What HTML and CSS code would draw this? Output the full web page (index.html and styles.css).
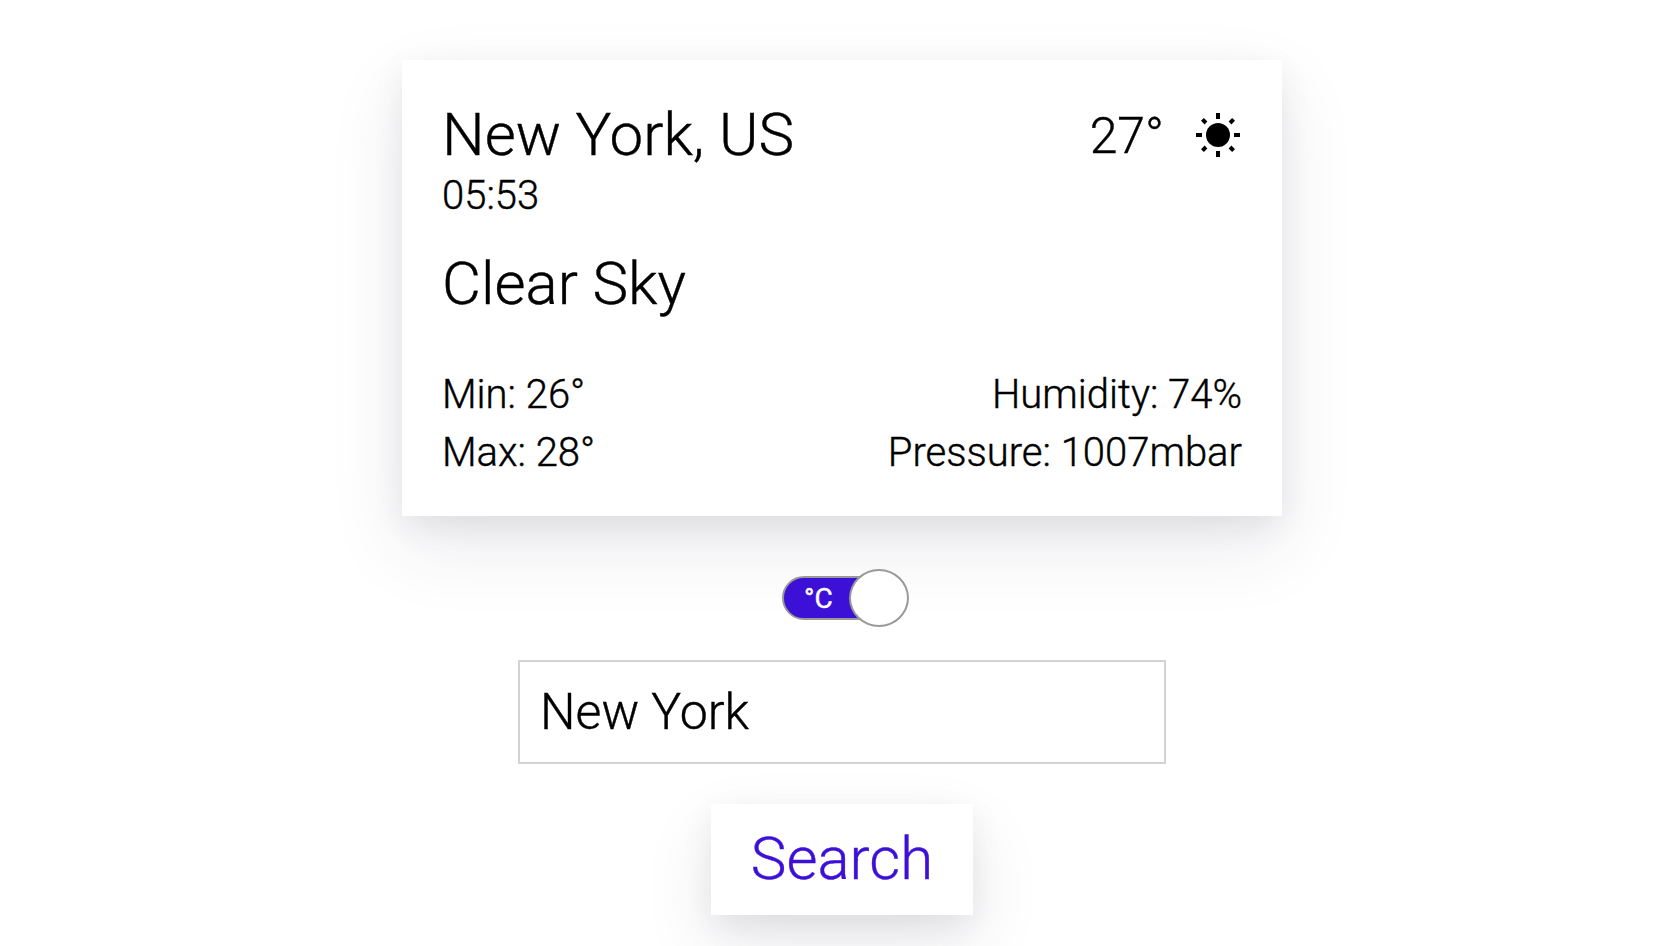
FILE: index.html
```html
<!DOCTYPE html>
<html lang="en">
<head>
<meta charset="utf-8">
<title>Weather</title>
<link rel="stylesheet" href="styles.css">
</head>
<body>
<main class="app">
  <section class="card">
    <header class="card-header">
      <div class="place">
        <h1 class="city">New York, US</h1>
        <div class="time">05:53</div>
      </div>
      <div class="current">
        <span class="temp">27°</span>
        <svg class="sun" viewBox="-24 -24 48 48" aria-hidden="true">
          <circle r="12"/>
          <path d="M-2-22h4v6h-4zM-2 16h4v6h-4zM-22-2h6v4h-6zM16-2h6v4h-6z"/>
          <path transform="rotate(45)" d="M-2-22h4v5h-4zM-2 17h4v5h-4zM-22-2h5v4h-5zM17-2h5v4h-5z"/>
        </svg>
      </div>
    </header>
    <h2 class="condition">Clear Sky</h2>
    <div class="details">
      <div class="column">
        <span>Min: 26°</span>
        <span>Max: 28°</span>
      </div>
      <div class="column column-right">
        <span>Humidity: 74%</span>
        <span>Pressure: 1007mbar</span>
      </div>
    </div>
  </section>
  <div class="toggle" role="switch" aria-checked="true">
    <div class="track">°C</div>
    <div class="knob"></div>
  </div>
  <form class="search">
    <input class="field" type="text" value="New York" aria-label="City">
    <button class="submit" type="button">Search</button>
  </form>
</main>
</body>
</html>
```
FILE: styles.css
```css
* {
  box-sizing: border-box;
}

body {
  margin: 0;
  height: 946px;
  overflow: hidden;
  background: #fff;
  color: #000;
  font-family: Roboto, sans-serif;
  font-weight: 300;
  -webkit-text-stroke: .4px currentColor;
}

.app {
  display: flex;
  flex-direction: column;
  align-items: center;
  padding: 60px 0 0 4px;
}

.card {
  width: 880px;
  height: 456px;
  padding: 40px;
  background: #fff;
  box-shadow: 0 30px 70px rgba(50, 50, 93, .1), 0 10px 30px rgba(0, 0, 0, .07);
}

.card-header {
  display: flex;
  justify-content: space-between;
  align-items: flex-start;
}

.city,
.condition {
  margin: 0;
  font-size: 60px;
  line-height: 70px;
  font-weight: 300;
}

.time {
  padding-top: 2px;
  font-size: 40px;
  line-height: 47px;
}

.current {
  display: flex;
  align-items: center;
  gap: 30px;
  height: 70px;
}

.temp {
  padding-top: 2px;
  font-size: 50px;
  line-height: 59px;
}

.sun {
  width: 48px;
  height: 48px;
}

.condition {
  margin-top: 30px;
}

.details {
  display: flex;
  justify-content: space-between;
  margin-top: 47px;
  font-size: 40px;
  line-height: 58px;
}

.column {
  display: flex;
  flex-direction: column;
}

.column-right {
  align-items: flex-end;
}

.toggle {
  position: relative;
  width: 120px;
  height: 58px;
  margin: 53px 0 33px;
  padding-top: 7px;
}

.track {
  width: 100px;
  height: 44px;
  padding-left: 20px;
  border: 2px solid #999;
  border-radius: 22px;
  background: #3c10d6;
  color: #fff;
  font-size: 28px;
  line-height: 41px;
  font-weight: 400;
}

.knob {
  position: absolute;
  top: 0;
  left: 67px;
  width: 60px;
  height: 58px;
  border: 2px solid #999;
  border-radius: 50%;
  background: #fff;
}

.search {
  display: flex;
  flex-direction: column;
  align-items: center;
}

.field {
  width: 648px;
  height: 104px;
  padding: 20px;
  border: 2px solid #d3d3d3;
  border-radius: 0;
  outline: none;
  background: #fff;
  color: #000;
  font: 300 50px Roboto, sans-serif;
  -webkit-text-stroke: .4px currentColor;
}

.submit {
  height: 111px;
  margin-top: 40px;
  padding: 19px 40px 21px;
  border: 0;
  background: #fff;
  box-shadow: 0 30px 70px rgba(50, 50, 93, .1), 0 10px 30px rgba(0, 0, 0, .07);
  color: #3c10d6;
  font: 300 60px Roboto, sans-serif;
  -webkit-text-stroke: .4px currentColor;
}
```
